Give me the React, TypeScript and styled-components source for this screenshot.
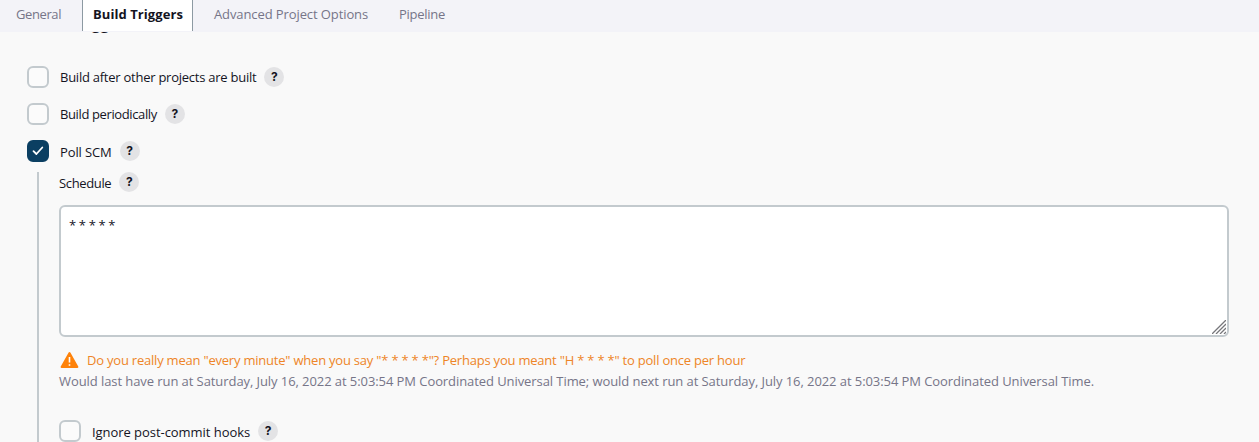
import React from 'react';
import styled, { createGlobalStyle } from 'styled-components';

const GlobalStyle = createGlobalStyle`
  * { box-sizing: border-box; }
  html, body, #root { height: 100%; }
  body {
    margin: 0;
    overflow: hidden;
    background: #f9f9f9;
    color: #14141f;
    font-family: "Open Sans", "Noto Sans", sans-serif;
    font-size: 13px;
    font-weight: 400;
    line-height: 20px;
  }
`;

const Page = styled.div`
  display: flex;
  flex-direction: column;
  height: 442px;
  overflow: hidden;
`;

const TabBar = styled.nav`
  display: flex;
  flex: none;
  height: 32px;
  padding-left: 5px;
  background: #f3f3f8;
`;

const Tab = styled.a<{ $width: number; $active?: boolean; $spacing?: number }>`
  flex: none;
  width: ${p => p.$width}px;
  height: ${p => (p.$active ? 31 : 32)}px;
  margin-right: ${p => (p.$active ? 10 : 0)}px;
  padding: 4px 0 0 ${p => (p.$active ? 10 : 11)}px;
  border: solid #8d9aa3;
  border-width: ${p => (p.$active ? '0 1px' : '0')};
  background: ${p => (p.$active ? '#fff' : 'transparent')};
  color: ${p => (p.$active ? '#14141f' : '#767588')};
  font-weight: ${p => (p.$active ? 700 : 400)};
  letter-spacing: ${p => p.$spacing ?? 0}px;
  white-space: nowrap;
`;

const Content = styled.main`
  flex: 1;
  min-height: 0;
  overflow: hidden;
  padding: 0 30px 0 27px;
`;

const Heading = styled.h2`
  height: 20px;
  margin: -19px 0 33px;
  font-size: 16px;
  font-weight: 700;
  letter-spacing: -0.25px;
  line-height: 20px;
`;

const Option = styled.label`
  display: flex;
  align-items: center;
  height: 22px;
  margin-bottom: 15px;
`;

const Box = styled.span<{ $checked?: boolean }>`
  display: flex;
  flex: none;
  align-items: center;
  justify-content: center;
  width: 22px;
  height: 22px;
  margin-right: 11px;
  border: 2px solid ${p => (p.$checked ? '#0b3f62' : '#c3cace')};
  border-radius: 6px;
  background: ${p => (p.$checked ? '#0b3f62' : '#fbfbfb')};
`;

const Text = styled.span<{ $spacing?: number; $drop?: number }>`
  padding-top: ${p => (p.$drop ?? 0) * 2}px;
  letter-spacing: ${p => p.$spacing ?? 0}px;
  white-space: pre;
`;

const HelpBadge = styled.span`
  flex: none;
  width: 20px;
  height: 20px;
  margin-left: 8px;
  border-radius: 50%;
  background: #e3e3e5;
  font-family: Inter, sans-serif;
  font-size: 12px;
  font-weight: 700;
  line-height: 20px;
  text-align: center;
`;

const Nested = styled.section`
  height: 300px;
  margin: -5px 0 0 10px;
  padding-left: 20px;
  border-left: 2px solid #c3cace;
`;

const FieldLabel = styled.div`
  display: flex;
  align-items: center;
  height: 20px;
  margin-bottom: 13px;
`;

const AreaFrame = styled.div`
  position: relative;
  height: 132px;
  margin-bottom: 13px;
`;

const Area = styled.textarea`
  display: block;
  width: 100%;
  height: 100%;
  padding: 8px;
  border: 2px solid #c3cace;
  border-radius: 6px;
  outline: 0;
  background: #fff;
  color: #14141f;
  font: inherit;
  letter-spacing: -0.35px;
  resize: none;
`;

const Grip = styled.svg`
  position: absolute;
  right: 3px;
  bottom: 3px;
`;

const Warning = styled.div`
  display: flex;
  align-items: center;
  height: 20px;
  color: #ee8527;
`;

const WarningIcon = styled.svg`
  flex: none;
  margin: 0 8px 0 1px;
`;

const Schedule = styled.div`
  height: 20px;
  margin: 1px 0 29px;
  color: #767588;
`;

const Help = () => <HelpBadge>?</HelpBadge>;

export default function App() {
  return (
    <Page>
      <GlobalStyle />
      <TabBar>
        <Tab $width={77} $spacing={-0.4}>General</Tab>
        <Tab $width={111} $spacing={0.07} $active>Build Triggers</Tab>
        <Tab $width={185} $spacing={-0.1}>Advanced Project Options</Tab>
        <Tab $width={70} $spacing={-0.27}>Pipeline</Tab>
      </TabBar>
      <Content>
        <Heading>Build Triggers</Heading>
        <Option><Box /><Text $spacing={-0.25}>Build after other projects are built</Text><Help /></Option>
        <Option><Box /><Text $spacing={-0.38}>Build periodically</Text><Help /></Option>
        <Option>
          <Box $checked>
            <svg width="12" height="10" viewBox="0 0 12 10" fill="none">
              <path d="M1.5 5.2 4.4 8 10.3 1.5" stroke="#fff" strokeWidth="1.8" strokeLinecap="round" strokeLinejoin="round" />
            </svg>
          </Box>
          <Text $spacing={-0.12} $drop={1}>Poll SCM</Text><Help />
        </Option>
        <Nested>
          <FieldLabel><Text $spacing={-0.36} $drop={1}>Schedule</Text><Help /></FieldLabel>
          <AreaFrame>
            <Area defaultValue="* * * * *" spellCheck={false} />
            <Grip width="14" height="14" viewBox="0 0 14 14" stroke="#77777b" strokeWidth="1.3">
              <path d="M0 14 14 0M4 14 14 4M8 14 14 8M12 14 14 12" />
            </Grip>
          </AreaFrame>
          <Warning>
            <WarningIcon width="19" height="18" viewBox="0 0 19 18">
              <path d="M9.5 2 17.4 16H1.6Z" fill="#fe820a" stroke="#fe820a" strokeWidth="2" strokeLinejoin="round" />
              <path d="M9.5 6v5.5M9.5 13.2v1.6" stroke="#fff" strokeWidth="1.6" />
            </WarningIcon>
            <Text $spacing={-0.215}>Do you really mean "every minute" when you say "* * * * *"? Perhaps you meant "H * * * *" to poll once per hour</Text>
          </Warning>
          <Schedule>
            <Text $spacing={-0.076}>Would last have run at Saturday, July 16, 2022 at 5:03:54 PM Coordinated Universal Time; would next run at Saturday, July 16, 2022 at 5:03:54 PM Coordinated Universal Time.</Text>
          </Schedule>
          <Option><Box /><Text $spacing={-0.05} $drop={1}>Ignore post-commit hooks</Text><Help /></Option>
        </Nested>
      </Content>
    </Page>
  );
}
